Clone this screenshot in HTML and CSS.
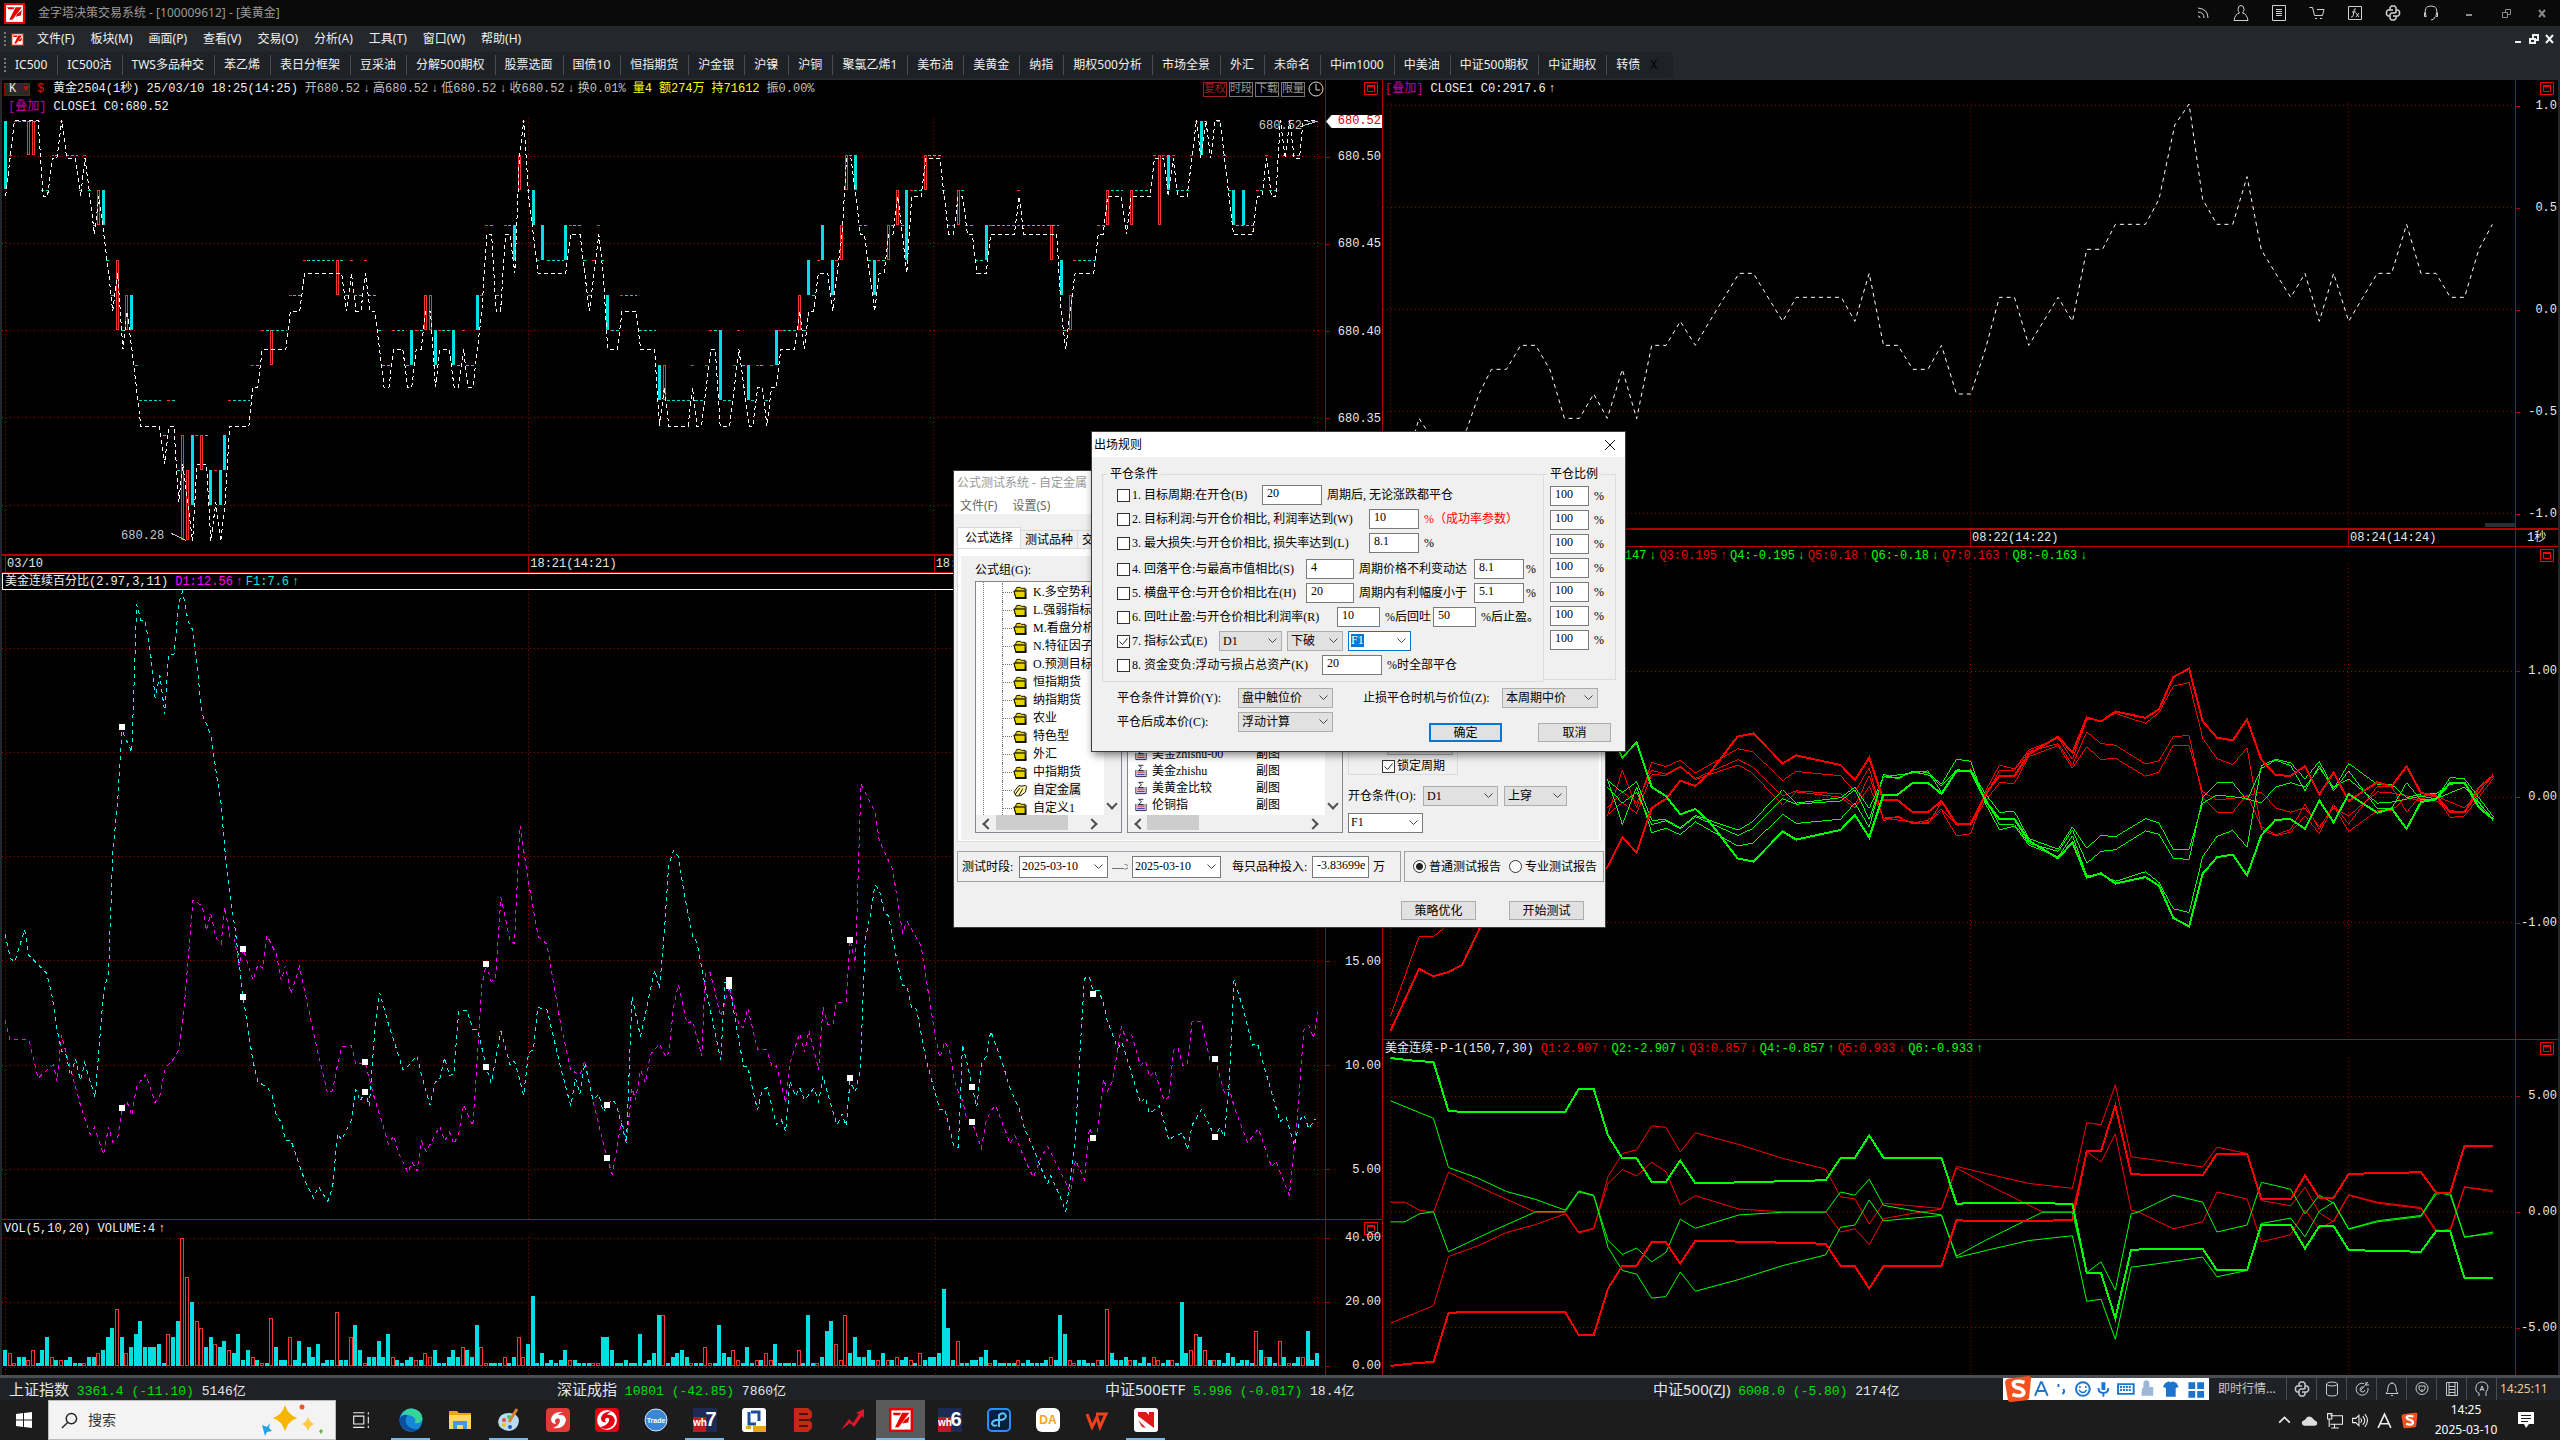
FILE: index.html
```html
<!DOCTYPE html>
<html lang="zh-CN">
<head>
<meta charset="utf-8">
<title>金字塔决策交易系统</title>
<link rel="stylesheet" href="styles.css">
</head>
<body>
<svg class="defs" aria-hidden="true">
  <symbol id="i-app" viewBox="0 0 20 20"><path fill="#e60000" d="M0 0h20v20H0z"/><path fill="#fff" d="M2 2h16v16H2z"/><path fill="#e60000" d="M3 4h7l-1 2H4zM11 4h6l-9 12H5zM13 10l4-3-1 5-5 1z"/></symbol>
  <symbol id="i-folder" viewBox="0 0 16 14"><path fill="#e6d200" stroke="#000" d="M3.500 12.500V3.500l1-2h4l1 1h4v3M1.500 5.500h11l2 7h-11z"/><path fill="#e6d200" stroke="#000" d="M1.500 5.500h12v7h-10z"/><path stroke="#000" d="M14.500 3v10M3 13.500h12"/></symbol>
  <symbol id="i-open" viewBox="0 0 16 14"><path fill="#fff7a0" stroke="#000" d="M1.500 8.500 6 2.500l2-1 1 1 5-1 1 1-1 6-5 4-5 .5z"/><path stroke="#000" fill="none" d="M3 11l5-7M7 12l4-7"/></symbol>
  <symbol id="i-formula" viewBox="0 0 14 16"><path fill="#fff" stroke="#1d1d40" d="M1.500 7.500v7h11v-7M3 8.500h8"/><path fill="none" stroke="#1d1d40" d="M9.500 2.500h-5l3 2.500-3 3h5"/><path stroke="#d00000" d="M3 10.500h8"/><path stroke="#0000c0" d="M3 12.500h8"/></symbol>
  <symbol id="i-max" viewBox="0 0 14 13"><path fill="none" stroke="#f00" d="M.5.5h13v12H.5z"/><path fill="none" stroke="#f00" d="M3.500 3.500h7v6h-7z"/><path stroke="#f00" stroke-width="2" d="M3 4h8"/></symbol>
  <symbol id="i-python" viewBox="0 0 16 16"><path fill="none" stroke="currentColor" stroke-width="1.500" d="M5 5V2.500L6.500 1h3L11 2.500v5L9.500 8h-3L5 9.500v4L6.500 15h3l1.500-1.500V11M8 5H3L1.500 6.500v3L3 11h2M8 11h5l1.500-1.500v-3L13 5h-2"/></symbol>
  <symbol id="i-sogou" viewBox="0 0 30 28"><path fill="#f4511e" d="M4 3 26 0q3 0 3 3l-2 20q0 3-3 3L7 28q-3 0-3-3L1 7q0-3 3-4z"/><path fill="none" stroke="#fff" stroke-width="4" d="M22 7q-10-3-12 1 0 4 6 5 6 2 5 6-2 4-12 1"/></symbol>
</svg>

<header class="titlebar">
  <svg class="logo"><use href="#i-app"/></svg>
  <span class="title">金字塔决策交易系统 - [100009612] - [美黄金]</span>
  <div class="title-tools">
    <button aria-label="订阅"><svg viewBox="0 0 16 16"><path class="ln" d="M3 3q10 1 10 10M3 7q6 0 6 6M3 11q2 0 2 2"/></svg></button>
    <button aria-label="用户"><svg viewBox="0 0 16 16"><path class="ln" d="M8 .5q-3 0-3 4 0 2 1.500 3.500Q2 9 1 15.500h14Q14 9 9.500 8 11 6.500 11 4.500q0-4-3-4z"/></svg></button>
    <button aria-label="资料"><svg viewBox="0 0 16 16"><path class="ln" d="M1.500.5h13v15h-13zM5 4.500h6M5 6.500h6M5 8.500h6M5 10.500h6"/></svg></button>
    <button aria-label="商城"><svg viewBox="0 0 16 16"><path class="ln" d="M.5 2.500h3l2 8h8l1.500-6H8M6 13.500h2M11 13.500h2"/></svg></button>
    <button aria-label="公式"><svg viewBox="0 0 16 16"><path class="ln" d="M1.500 1.500h13v13h-13zM9 4q-2-1-2 2l-1 5q0 1-2 1M5 7h4M9 8l3 4M12 8l-3 4"/></svg></button>
    <button aria-label="Python"><svg viewBox="0 0 16 16"><use href="#i-python"/></svg></button>
    <button aria-label="客服"><svg viewBox="0 0 16 16"><path class="ln" d="M3 11Q0 1 8 1t5 10M1.500 7.500v4h2M14.500 7.500v4h-2M12 12q-1 3-4 3"/></svg></button>
    <button class="dim" aria-label="最小化"><svg viewBox="0 0 16 16"><path class="ln" stroke-width="2" d="M5 10h6"/></svg></button>
    <button class="dim" aria-label="还原"><svg viewBox="0 0 16 16"><path class="ln" d="M4.500 7.500h5v5h-5zM7.500 7V4.500h5v5H10"/></svg></button>
    <button class="dim" aria-label="关闭"><svg viewBox="0 0 16 16"><path class="ln" stroke-width="2" d="m5 5 6 7M11 5l-6 7"/></svg></button>
  </div>
</header>

<nav class="menubar">
  <i class="grip"></i>
  <svg class="mdi"><use href="#i-app"/></svg>
  <a href="#">文件(F)</a><a href="#">板块(M)</a><a href="#">画面(P)</a><a href="#">查看(V)</a><a href="#">交易(O)</a><a href="#">分析(A)</a><a href="#">工具(T)</a><a href="#">窗口(W)</a><a href="#">帮助(H)</a>
  <div class="mdi-tools">
    <button aria-label="最小化"><svg viewBox="0 0 12 12"><path class="ln" stroke-width="2" d="M3 9h6"/></svg></button>
    <button aria-label="还原"><svg viewBox="0 0 12 12"><path class="ln" stroke-width="2" d="M2 6h5v4H2zM5 5V2h5v5H8"/></svg></button>
    <button aria-label="关闭"><svg viewBox="0 0 12 12"><path class="ln" stroke-width="2" d="m2 2 7 8M9 2l-7 8"/></svg></button>
  </div>
</nav>

<nav class="tabstrip"><div class="tabs">
  <i class="grip"></i>
  <a href="#">IC500</a><a href="#">IC500沽</a><a href="#">TWS多品种交</a><a href="#">苯乙烯</a><a href="#">表日分框架</a><a href="#">豆采油</a><a href="#">分解500期权</a><a href="#">股票选面</a><a href="#">国债10</a><a href="#">恒指期货</a><a href="#">沪金银</a><a href="#">沪镍</a><a href="#">沪铜</a><a href="#">聚氯乙烯1</a><a href="#">美布油</a><a href="#">美黄金</a><a href="#">纳指</a><a href="#">期权500分析</a><a href="#">市场全景</a><a href="#">外汇</a><a href="#">未命名</a><a href="#">中im1000</a><a href="#">中美油</a><a href="#">中证500期权</a><a href="#">中证期权</a><a href="#">转债</a>
  <button class="tab-close">X</button>
</div></nav>

<main class="charts">
  <div class="col col-left">
    <section class="panel p-price">
      <div class="head two">
        <div class="line">
          <span class="kbox">K<b>▾</b></span><span class="red">$</span>
          <span class="white">黄金2504(1秒) 25/03/10 18:25(14:25)</span>
          <span class="quote">开680.52<i>↓</i>高680.52<i>↓</i>低680.52<i>↓</i>收680.52<i>↓</i>换0.01%</span>
          <span class="yellow">量4</span><span class="yellow">额274万</span><span class="yellow">持71612</span><span class="quote">振0.00%</span>
          <span class="chips"><button class="hot">复权</button><button>时段</button><button>下载</button><button>限量</button><svg viewBox="0 0 16 16"><circle cx="8" cy="8" r="7" class="ln"/><path class="ln" d="M8 3v6h4"/></svg></span>
        </div>
        <div class="line"><span class="magenta">[叠加]</span><span class="white">CLOSE1 C0:680.52</span></div>
      </div>
      <div class="corner"><svg><use href="#i-max"/></svg></div>
      <div class="plot">
        <svg viewBox="4 24 2964 1308" preserveAspectRatio="none">
          <path class="grid" d="M4 139H2968M4 400H2968M4 661H2968M4 922H2968M4 1186H2968M12 24V1332M1184 24V1332M2092 24V1332M2951 24V1332"/>
          <path class="up" d="M64 34V135M75 34V135M221 241V345M263 451V660M284 556V660M409 976V1290M420 1081V1290M452 976V1080M608 661V765M756 451V555M953 556V660M964 556V660M1163 136V240M1489 766V870M1791 556V660M1885 346V450M1896 136V240M1990 346V450M2011 241V345M2073 136V240M2147 241V345M2356 346V450M2397 556V660M2480 241V345M2534 241V345M2597 136V345"/>
          <path class="up-core" d="M64 37V132M75 37V132M221 244V342M263 454V657M284 559V657M409 979V1287M420 1084V1287M452 979V1077M608 664V762M756 454V552M953 559V657M964 559V657M1163 139V237M1489 769V867M1791 559V657M1885 349V447M1896 139V237M1990 349V447M2011 244V342M2073 139V237M2147 244V342M2356 349V447M2397 559V657M2480 244V342M2534 244V342M2597 139V342"/>
          <path class="down" d="M12 34V238M232 241V345M295 556V660M431 976V1185M472 1081V1185M494 1081V1185M503 976V1080M921 661V765M975 661V765M1016 661V765M1070 556V660M1153 346V450M1195 241V345M1215 346V450M1267 346V450M1361 556V660M1477 766V870M1614 661V870M1676 766V870M1740 661V765M1811 451V555M1843 346V450M1864 451V555M1917 136V240M1959 451V555M2031 241V450M2209 346V450M2377 451V555M2617 136V240M2691 34V135M2763 241V345M2785 241V345"/>
          <path class="flat cy" d="M40 34H90M92 241h17M123 136h7M147 136h27M176 241h7M197 241h7M208 346h7M238 451h8M249 556h7M271 661h7M301 766h8M311 871h50M385 871h7M364 976h8M396 1081h7M458 976h8M521 871h39M573 766h8M595 661h48M656 556h19M688 451h60M762 451h7M772 556h8M793 556h18M825 556h17M846 661h7M856 766h18M888 661h17M909 766h7M940 661h8M990 661h20M1023 766h8M1043 766h20M1097 346h7M1110 556h14M1138 346h8M1180 241h7M1201 451h7M1224 451h38M1284 346h19M1305 451h8M1317 556h7M1347 451h8M1369 661h18M1399 556h28M1431 661h38M1494 871h51M1557 871h19M1599 661h8M1620 871h18M1662 766h8M1682 871h8M1703 766h9M1714 871h7M1753 661h31M1798 661h10M1819 556h8M1901 136h9M1924 346h17M1944 451h7M1975 451h8M1995 346h8M2018 346h7M2048 241h18M2079 136h30M2111 241h8M2121 346h20M2152 241h8M2162 346h20M2184 451h20M2223 346h148M2381 661h12M2414 451h40M2468 346h7M2488 241h28M2519 346h8M2542 241h36M2635 241h28M2727 34h8M2740 136h8M2750 241h8M2768 346h42M2822 241h9M2843 241h19M2873 136h10M2895 136h20M2928 34h25"/>
          <path class="flat rd" d="M20 136h7M30 34h7M115 136h6M134 34h7M186 136h7M373 871h8M437 976h7M479 1081h7M511 871h7M562 766h8M585 661h7M647 556h8M679 451h7M784 451h7M815 451h7M878 661h7M930 661h7M981 661h7M1035 661h7M1075 556h7M1086 346h7M1129 346h7M1169 34h7M1274 346h7M1326 451h7M1337 346h7M1389 556h7M1548 766h7M1579 766h7M1588 661h7M1651 661h7M1641 766h7M1693 766h7M1725 766h7M1744 661h7M1830 451h7M1871 451h7M1964 451h7M2038 241h7M2216 346h7M2279 241h7M2404 451h7M2458 346h7M2583 136h7M2603 136h7M2625 136h7M2666 136h7M2676 34h7M2696 34h8M2814 241h7M2834 136h7M2865 34h7M2886 34h7"/>
          <polyline class="dash white-l" points="12,259 32,31 85,31 96,259 106,259 117,145 127,145 138,31 149,145 168,145 180,259 190,145 201,259 211,373 221,259 232,373 243,490 252,604 263,490 275,718 284,604 295,718 305,832 315,949 357,949 368,1062 378,949 389,949 400,1177 409,1062 420,1177 431,1294 441,1062 462,1062 472,1294 483,1177 494,1294 504,1177 514,949 557,949 566,832 577,832 587,718 640,718 650,604 671,604 682,490 765,490 776,604 787,490 797,604 808,604 818,490 829,604 839,604 850,718 860,832 871,832 881,718 902,718 913,832 922,832 932,718 943,718 953,604 964,604 975,832 985,718 1006,718 1017,832 1027,832 1038,718 1048,832 1059,832 1069,718 1079,604 1090,373 1101,373 1111,604 1121,604 1132,373 1142,373 1153,490 1163,145 1173,31 1184,259 1205,490 1267,490 1278,373 1299,373 1320,604 1341,373 1351,490 1361,718 1383,718 1393,604 1424,604 1435,718 1466,718 1477,949 1488,832 1498,949 1541,949 1551,832 1561,949 1571,949 1592,718 1602,718 1613,949 1634,949 1655,718 1678,949 1686,949 1697,832 1707,832 1718,949 1728,832 1738,832 1749,718 1780,718 1791,604 1802,718 1811,604 1822,604 1833,490 1854,490 1865,604 1875,490 1886,373 1896,145 1906,145 1917,259 1927,373 1936,373 1948,490 1959,604 1969,490 1980,490 1991,373 2000,373 2011,259 2021,373 2031,490 2042,259 2063,259 2074,145 2105,145 2115,259 2125,373 2136,373 2146,259 2156,259 2167,373 2178,373 2188,490 2209,490 2219,373 2272,373 2283,259 2293,373 2367,373 2377,604 2387,718 2397,604 2408,490 2450,490 2460,373 2471,373 2481,259 2512,259 2523,373 2534,259 2576,259 2586,145 2607,145 2617,259 2628,145 2638,259 2659,259 2670,145 2680,31 2690,145 2701,31 2712,145 2722,31 2733,31 2743,145 2753,259 2763,373 2806,373 2816,259 2827,259 2837,145 2848,259 2858,259 2868,31 2879,145 2889,31 2899,145 2911,145 2919,31 2953,31"/>
          <path class="pointer" d="M383 1270 416 1291M2912 50 2950 34"/>
        </svg>
        <span class="note note-low">680.28</span><span class="note note-high">680.52</span>
      </div>
      <div class="axis"><span>680.50</span><span>680.45</span><span>680.40</span><span>680.35</span><span>680.30</span><b class="tag">680.52</b></div>
    </section>
    <div class="times"><span>03/10</span><span>18:21(14:21)</span><span>18:22(14:22)</span></div>
    <section class="panel p-ratio">
      <div class="head boxed"><span class="white">美金连续百分比(2.97,3,11)</span><span class="fuchsia">D1:12.56<i>↑</i></span><span class="aqua">F1:7.6<i>↑</i></span></div>
      <div class="plot">
        <svg viewBox="3 39 2161 1217" preserveAspectRatio="none">
          <path class="grid" d="M3 152H2164M3 353H2164M3 555H2164M3 756H2164M3 959H2164M3 1161H2164M8 39V1256M863 39V1256M1527 39V1256M2152 39V1256"/>
          <polyline class="dash fuchsia-l" points="8,872 16,909 47,909 62,984 71,973 87,958 93,990 100,900 115,966 131,1035 147,1092 154,1079 169,1131 177,1078 184,1107 192,1100 199,1041 207,1028 215,1056 223,999 238,976 253,1031 261,1017 269,965 284,945 292,928 299,867 307,755 315,639 330,650 337,697 344,665 353,713 361,723 367,652 375,710 383,715 390,765 397,733 413,794 421,764 429,771 436,708 451,743 459,794 466,766 475,820 489,768 497,813 520,940 535,1013 543,1008 551,958 558,923 574,921 581,958 596,953 612,1025 628,1085 634,1111 643,1095 650,1126 666,1166 673,1146 681,1163 688,1105 696,1125 718,1077 726,1105 734,1088 741,1111 749,1091 757,1035 772,1076 787,802 794,763 802,796 809,793 818,634 833,718 840,723 849,495 863,604 871,657 879,710 893,724 916,882 932,968 947,977 955,950 970,1035 991,1138 1000,1170 1015,1064 1023,1105 1032,1003 1038,1025 1046,968 1054,992 1062,938 1077,917 1088,943 1092,935 1100,845 1108,803 1122,878 1131,873 1146,940 1152,779 1160,780 1177,864 1191,806 1207,882 1214,886 1221,847 1237,928 1252,928 1261,961 1268,960 1283,1031 1290,954 1306,897 1314,933 1321,891 1337,968 1344,846 1352,880 1360,881 1366,837 1382,836 1388,716 1397,760 1406,415 1429,468 1436,524 1444,545 1458,580 1466,643 1474,702 1481,680 1504,727 1527,900 1535,944 1543,913 1551,931 1558,984 1568,1022"/>
          <polyline class="dash aqua-l" points="8,705 17,752 24,758 40,696 47,746 64,766 76,780 85,826 92,884 100,931 107,935 115,979 123,946 131,988 138,954 155,1021 169,815 177,780 184,545 192,447 199,310 215,353 223,67 230,98 237,99 246,165 253,247 261,204 269,279 275,163 284,163 292,62 298,42 307,100 314,115 322,185 329,277 338,301 345,325 353,393 361,454 368,555 376,634 384,697 397,827 405,890 413,951 421,990 437,1003 444,1014 451,1056 459,1068 466,1103 475,1104 484,1135 497,1180 512,1215 520,1193 535,1222 543,1196 551,1091 558,1103 574,1064 581,1005 588,1028 596,1010 603,1037 612,890 620,818 634,878 645,918 658,968 666,960 681,940 688,976 702,1036 711,990 718,986 726,944 734,979 741,974 749,853 763,853 772,889 780,890 794,962 802,993 818,893 833,958 840,951 848,984 855,1017 863,935 871,928 878,847 893,850 908,925 916,965 932,1037 940,984 947,1014 955,954 968,1025 978,1015 985,1048 1000,1024 1007,1037 1023,1110 1032,826 1046,903 1062,813 1069,774 1077,810 1085,700 1092,570 1100,543 1108,555 1117,625 1131,709 1138,720 1146,770 1154,820 1161,858 1177,948 1184,797 1191,806 1199,859 1214,960 1221,961 1237,1045 1245,1006 1253,1002 1268,1073 1276,1064 1283,1087 1290,990 1299,1018 1306,1002 1314,1026 1329,1003 1337,1029 1344,980 1360,1048 1367,1074 1375,1053 1382,1076 1388,990 1397,1010 1405,968 1413,715 1421,670 1429,610 1436,619 1444,662 1451,670 1466,763 1474,804 1481,805 1489,848 1497,850 1504,896 1512,945 1527,1012 1535,1045 1543,1043 1558,1116 1565,1117 1568,1038"/>
          <g transform="translate(1568 677.5) scale(.5444 .6453)">
            <polyline class="dash fuchsia-l" points="0,534 7,540 18,590 36,606 64,685 78,604 92,572 107,556 150,670 164,646 205,742 220,772 242,714 263,678 331,816 346,720 373,778 388,622 398,652 412,637 430,478 443,512 458,480 484,320 500,362 515,346 541,436 556,423 568,470 584,454 612,542 626,530 641,390 653,382 668,436 682,436 696,304 724,305 750,420 765,417 793,518 808,505 822,560 863,668 895,626 935,742 947,722 988,826 1003,677 1012,590 1031,330 1046,315 1060,355 1073,276"/>
            <polyline class="dash aqua-l" points="0,560 7,373 21,430 50,562 65,427 79,408 92,333 130,438 148,500 178,568 192,622 222,690 250,762 263,790 272,766 300,829 317,874 331,770 346,650 357,440 373,175 388,170 398,210 417,212 431,254 441,300 473,385 486,368 515,462 541,548 556,533 568,580 598,558 612,606 626,660 641,649 668,638 682,690 696,615 725,567 765,651 779,622 793,649 808,480 822,178 849,265 877,376 892,370 960,604 978,590 1003,677 1018,602 1031,583 1046,625 1066,597"/>
            <path class="marks" d="M36 501h.1M36 606h.1M399 222h.1M399 654h.1M765 417h.1M765 651h.1"/>
          </g>
          <path class="marks" d="M199 304h.1M199 1041h.1M397 733h.1M397 827h.1M596 952h.1M596 1010h.1M794 763h.1M794 962h.1M991 1035h.1M991 1138h.1M1191 794h.1M1191 806h.1M1388 716h.1M1388 984h.1"/>
        </svg>
      </div>
      <div class="axis"><span>30.00</span><span>25.00</span><span>20.00</span><span>15.00</span><span>10.00</span><span>5.00</span></div>
    </section>
    <section class="panel p-vol">
      <div class="head"><span class="white">VOL(5,10,20) VOLUME:4<i>↑</i></span></div>
      <div class="corner"><svg><use href="#i-max"/></svg></div>
      <div class="plot">
        <svg viewBox="3 1289 2161 269" preserveAspectRatio="none">
          <path class="grid" d="M3 1292H2164M3 1416H2164M3 1543H2164M8 1289V1558M863 1289V1558M1527 1289V1558M2152 1289V1558"/>
          <path class="vol-up" id="vol-up"/><path class="vol-core" id="vol-core"/><path class="vol-down" id="vol-down"/>
        </svg>
      </div>
      <div class="axis"><span>40.00</span><span>20.00</span><span>0.00</span></div>
    </section>
  </div>

  <div class="col col-right">
    <section class="panel p-overlay">
      <div class="head"><span class="magenta">[叠加]</span><span class="white">CLOSE1 C0:2917.6<i>↑</i></span></div>
      <div class="corner"><svg><use href="#i-max"/></svg></div>
      <div class="plot">
        <svg viewBox="4 81 1504 1293" preserveAspectRatio="none">
          <path class="grid" d="M4 106H1508M4 412H1508M4 718H1508M4 1024H1508M4 1330H1508M14 100V1374M785 100V1374M1287 100V1374"/>
          <polyline class="dash white-l" points="46,1090 52,1045 63,1084 80,1120 100,1120 115,1080 132,970 148,898 168,898 187,826 207,826 226,900 245,1045 265,1045 284,972 302,1045 322,898 341,1046 361,826 380,826 399,754 419,826 438,754 477,610 496,610 535,754 553,682 613,682 631,754 650,610 669,826 688,826 708,898 728,898 746,826 766,972 785,972 804,840 823,682 843,682 862,826 901,682 920,754 939,538 960,538 977,463 1017,463 1035,388 1056,165 1075,102 1093,388 1112,463 1133,463 1152,320 1171,540 1190,610 1210,682 1229,610 1248,754 1267,610 1287,754 1306,682 1325,610 1344,610 1364,463 1383,610 1403,610 1422,682 1441,682 1460,538 1478,463"/>
          <path fill="#2b2e33" d="M1468 1359h40v12h-40z"/>
        </svg>
      </div>
      <div class="axis"><span>1.0</span><span>0.5</span><span>0.0</span><span>-0.5</span><span>-1.0</span></div>
    </section>
    <div class="times"><span>08:20(14:20)</span><span>08:22(14:22)</span><span>08:24(14:24)</span><span class="unit">1秒</span></div>
    <section class="panel p-multi">
      <div class="head"><span class="white lead">美金连续-P(8,30)</span><span class="qs"><span class="q-r">Q1:0.147<i>↑</i></span><span class="q-g">Q2:-0.147<i>↓</i></span><span class="q-r">Q3:0.195<i>↑</i></span><span class="q-g">Q4:-0.195<i>↓</i></span><span class="q-r">Q5:0.18<i>↑</i></span><span class="q-g">Q6:-0.18<i>↓</i></span><span class="q-r">Q7:0.163<i>↑</i></span><span class="q-g">Q8:-0.163<i>↓</i></span></span></div>
      <div class="corner"><svg><use href="#i-max"/></svg></div>
      <div class="plot">
        <svg viewBox="4 45 1504 886" preserveAspectRatio="none">
          <defs>
            <polyline id="m1" points="14,916 52,800 71,814 91,806 109,793 133,723 200,640 302,611 322,555 341,583 361,500 380,483 399,449 419,459 438,435 475,367 496,361 535,417 553,402 612,420 631,448 650,406 669,486 688,486 708,508 728,508 746,487 766,530 785,530 804,475 823,440 843,440 862,400 901,367 920,397 939,331 958,339 977,320 1017,332 1035,316 1054,256 1075,240 1093,338 1112,369 1133,374 1152,335 1171,410 1190,439 1210,440 1229,422 1248,475 1267,434 1287,487 1325,452 1344,460 1364,422 1383,472 1403,477 1422,508 1441,508 1460,462 1479,440"/>
            <g id="m2">
              <polyline points="302,515 322,430 341,500 361,415 380,423 399,411 419,435 475,390 496,396 535,449 553,432 612,440 631,470 650,425 669,524 688,515 708,530 728,527 746,505 766,552 785,548 804,470 823,420 843,427 862,392 901,370 920,409 939,335 958,337 977,324 1017,342 1035,322 1054,273 1075,266 1093,370 1112,408 1133,419 1152,388 1171,540 1190,552 1210,545 1229,515 1248,548 1267,496 1287,544 1325,505 1344,505 1364,480 1383,487 1403,487 1422,505 1441,508 1479,437"/>
              <polyline points="302,500 322,470 341,490 361,430 380,437 399,422 419,445 475,410 496,424 535,478 553,468 612,474 631,495 650,440 669,519 688,517 708,528 728,523 746,502 766,532 785,531 804,480 823,430 843,430 862,395 901,380 920,420 939,358 958,380 977,383 1017,418 1035,412 1054,367 1075,365 1093,480 1112,508 1133,508 1152,475 1171,535 1190,550 1210,540 1229,493 1248,540 1267,493 1287,530 1325,460 1344,460 1364,508 1383,476 1403,478 1422,518 1441,515 1479,445"/>
              <polyline points="302,513 322,490 341,510 361,438 380,439 399,424 419,447 475,420 496,437 535,495 553,470 612,480 631,500 650,460 669,519 728,530 746,490 766,528 785,532 804,488 823,453 843,454 862,404 901,384 920,426 939,386 958,410 977,407 1017,441 1035,433 1054,383 1075,384 1093,470 1112,485 1133,482 1152,478 1171,470 1190,500 1210,508 1229,500 1248,535 1267,500 1287,515 1325,470 1344,472 1383,483 1403,478 1441,500 1479,440"/>
            </g>
            <clipPath id="rightof"><path d="M250 0h1300v1000H250z"/></clipPath>
          </defs>
          <path class="grid" d="M4 245H1508M4 480H1508M4 714H1508M14 45V931M785 45V931M1287 45V931"/>
          <g class="s-red"><use href="#m2"/><polyline points="14,888 52,740 71,740 86,723 120,690"/></g>
          <g class="s-green"><use href="#m2" transform="matrix(1 0 0 -1 0 961)"/></g>
          <g class="s-red thick"><use href="#m1"/></g>
          <g class="s-green thick"><use href="#m1" transform="matrix(1 0 0 -1 0 961)" clip-path="url(#rightof)"/></g>
        </svg>
      </div>
      <div class="axis"><span>1.00</span><span>0.00</span><span>-1.00</span></div>
    </section>
    <section class="panel p-p1">
      <div class="head"><span class="white">美金连续-P-1(150,7,30)</span><span class="qs"><span class="q-r">Q1:2.907<i>↑</i></span><span class="q-g">Q2:-2.907<i>↓</i></span><span class="q-r">Q3:0.857<i>↓</i></span><span class="q-g">Q4:-0.857<i>↑</i></span><span class="q-r">Q5:0.933<i>↓</i></span><span class="q-g">Q6:-0.933<i>↑</i></span></span></div>
      <div class="corner"><svg><use href="#i-max"/></svg></div>
      <div class="plot">
        <svg viewBox="4 963 1504 596" preserveAspectRatio="none">
          <defs>
            <polyline id="n1" points="14,965 52,971 71,972 91,1064 110,1066 246,1066 264,1023 284,1023 303,1110 322,1153 341,1153 361,1197 380,1197 399,1157 419,1200 592,1194 612,1152 631,1152 650,1110 669,1152 746,1152 766,1238 804,1236 920,1238 939,1368 958,1368 977,1453 998,1324 1093,1322 1112,1363 1152,1363 1171,1277 1210,1277 1229,1322 1248,1280 1267,1280 1287,1325 1383,1328 1403,1290 1422,1290 1441,1378 1479,1378"/>
            <g id="n2">
              <polyline points="14,1045 52,1067 71,1078 91,1170 130,1190 168,1215 207,1230 246,1250 264,1214 284,1222 303,1320 322,1363 341,1370 361,1415 380,1412 399,1366 419,1402 477,1380 535,1354 592,1334 612,1282 631,1278 650,1231 669,1270 746,1260 766,1339 804,1326 862,1307 920,1298 939,1421 958,1417 977,1492 998,1357 1035,1350 1093,1338 1112,1375 1152,1363 1171,1275 1210,1265 1229,1300 1248,1252 1267,1235 1287,1285 1325,1270 1383,1260 1403,1216 1422,1222 1441,1300 1479,1294"/>
              <polyline points="14,1272 33,1272 52,1257 71,1253 91,1328 148,1290 207,1253 246,1253 264,1216 284,1223 303,1307 322,1333 341,1321 361,1347 380,1329 399,1267 419,1284 477,1259 535,1254 592,1254 612,1216 631,1222 650,1192 669,1241 708,1251 746,1259 766,1336 804,1307 880,1254 920,1254 939,1367 958,1347 977,1400 998,1257 1007,1254 1054,1222 1093,1235 1112,1291 1152,1278 1171,1198 1190,1204 1210,1211 1229,1257 1248,1222 1267,1237 1287,1286 1325,1272 1383,1262 1403,1220 1422,1217 1441,1301 1479,1291"/>
            </g>
          </defs>
          <path class="grid" d="M4 1037H1508M4 1253H1508M4 1470H1508M14 963V1559M785 963V1559M1287 963V1559"/>
          <g class="s-red"><use href="#n2" transform="matrix(1 0 0 -1 0 2507)"/></g>
          <g class="s-green"><use href="#n2"/></g>
          <g class="s-red thick"><use href="#n1" transform="matrix(1 0 0 -1 0 2507)"/></g>
          <g class="s-green thick"><use href="#n1"/></g>
        </svg>
      </div>
      <div class="axis"><span>5.00</span><span>0.00</span><span>-5.00</span></div>
    </section>
  </div>
</main>

<footer class="status">
  <div class="indices">
    <span><b>上证指数</b> <em>3361.4 (-11.10)</em> 5146亿</span>
    <span><b>深证成指</b> <em>10801 (-42.85)</em> 7860亿</span>
    <span><b>中证500ETF</b> <em>5.996 (-0.017)</em> 18.4亿</span>
    <span><b>中证500(ZJ)</b> <em>6008.0 (-5.80)</em> 2174亿</span>
  </div>
  <div class="status-tools">
    <span class="live">即时行情...</span>
    <button aria-label="Python"><svg viewBox="0 0 16 16"><use href="#i-python"/></svg></button>
    <button aria-label="数据"><svg viewBox="0 0 16 16"><path class="ln" d="M2.500 3v10q0 2 5.500 2t5.500-2V3q0-2-5.500-2T2.500 3q0 2 5.500 2t5.500-2"/></svg></button>
    <button aria-label="目标"><svg viewBox="0 0 16 16"><path class="ln" d="M10 2.500A6 6 0 1 0 14 7M9 6a2.500 2.500 0 1 0 2 3M7 9l7-8M12 1v3h3"/></svg></button>
    <button aria-label="提醒"><svg viewBox="0 0 16 16"><path class="ln" d="M2 12.500h12q-2-1-2-6 0-4-4-4.500-4 .5-4 4.500 0 5-2 6M7 14.500h2M8 1v1"/></svg></button>
    <button aria-label="设置"><svg viewBox="0 0 16 16"><circle class="ln" cx="8" cy="7.500" r="6"/><path class="ln" d="M5 5h6v3q-3 5-6 0zM8 8v3"/></svg></button>
    <button aria-label="日志"><svg viewBox="0 0 16 16"><path class="ln" d="M2.500 1.500h11v13h-11zM5 1v14M11 1v14M5 5.500h6M5 8.500h6M5 11.500h6"/></svg></button>
    <button aria-label="AI"><svg viewBox="0 0 16 16"><path class="ln" d="M5 15v-3Q1 11 2 6q1-5 6-5t6 5q0 3-2 5v4M6 10l2-5 2 5M7 8.500h2"/></svg></button>
    <time>14:25:11</time>
  </div>
  <div class="ime">
    <svg class="ime-logo"><use href="#i-sogou"/></svg>
    <svg viewBox="0 0 176 18" class="ime-icons">
      <g fill="none" stroke="#1b75d0" stroke-width="2"><path d="M1 16 7 2h1l6 14M3.500 11h8"/><path d="M25 4v3M30 9q2 3-1 5"/><circle cx="50" cy="9" r="7"/><path d="M47 6v2M53 6v2M46 10q4 5 8 0" stroke-width="1.500"/><path d="M66 8q0 5 5 5t5-5M71 13v4"/><path d="M86 4h16v10H86z"/><path d="M88 7h12M88 10h12" stroke-dasharray="2 1"/></g>
      <path fill="#1b75d0" d="M69 2h4v8h-4zM134 3l4-2q2 2 4 0l4 2 2 4-3 1v9h-10V8l-3-1zM158 2h7v7h-7zM167 2h7v7h-7zM158 11h7v7h-7zM167 11h7v7h-7z"/>
      <path fill="#9db7d8" d="M112 3a3 3 0 1 1 6 0v4h4v9h-12q0-8 2-9z"/>
    </svg>
  </div>
</footer>

<footer class="taskbar">
  <button class="start" aria-label="开始"><svg viewBox="0 0 16 16"><path fill="#fff" d="M0 2l7-1v6.500H0zM8 1l8-1v7.500H8zM0 8.500h7V15l-7-1zM8 8.500h8V16l-8-1z"/></svg></button>
  <label class="search">
    <svg viewBox="0 0 18 18"><circle cx="11" cy="7" r="5.500" fill="none" stroke="#222" stroke-width="1.500"/><path stroke="#222" stroke-width="1.500" d="m7 11-6 6"/></svg>
    <input type="text" placeholder="搜索">
    <svg class="spark" viewBox="0 0 64 32"><path fill="#f7b500" d="M24 1q3 10 12 13-9 3-12 13-3-10-12-13Q21 11 24 1z"/><path fill="#ffcb45" d="M47 13q1.500 5 6 7-4.500 2-6 7-1.500-5-6-7 4.500-2 6-7z"/><path fill="#1fa2e8" d="m1 21 5 2 3-4-1 5 3 3-5 1-2 4z"/><circle cx="41" cy="3" r="2.500" fill="#e8572a"/><path fill="#6cb33f" d="m60 25 2 2-2 3-2-3z"/></svg>
  </label>
  <button class="tview" aria-label="任务视图"><svg viewBox="0 0 16 16"><path fill="none" stroke="#eee" d="M1 1.500h10M1.500 4.500h9v7h-9zM1 14.500h10M14.500 1v2M14.500 5v6M14.500 13v2"/></svg></button>
  <div class="apps">
    <button class="open" aria-label="Edge"><svg viewBox="0 0 24 24"><circle cx="12" cy="12" r="11.500" fill="#1686d9"/><path fill="#38d39a" d="M2 8Q6 0 13 .5 23 2 23.500 11q-1 5-8 4 2-2 0-5Q11 5 2 8z"/><path fill="#0c4f9e" d="M.5 12q2-6 8-5-3 4-1 9 3 6 12 5-4 3-9 2Q1 21 .5 12z"/></svg></button>
    <button aria-label="文件"><svg viewBox="0 0 24 24"><path fill="#e9a700" d="M1 3h8l2 2h12v16H1z"/><path fill="#ffd75e" d="M1 7h22v14H1z"/><path fill="#3f9ae0" d="M5 21v-8h14v8h-4v-4H9v4z"/></svg></button>
    <button class="open" aria-label="画图"><svg viewBox="0 0 24 24"><path fill="#b9dcf3" d="M12 5q9 0 10 8-1 9-10 10Q2 22 1 14q1-9 11-9z"/><circle cx="7" cy="12" r="2" fill="#e74c3c"/><circle cx="12" cy="9" r="2" fill="#2ecc71"/><circle cx="7" cy="17" r="2" fill="#f1c40f"/><circle cx="13" cy="19" r="2" fill="#2257c4"/><path stroke="#d9822b" stroke-width="3" d="m12 14 8-13"/></svg></button>
    <button aria-label="同花顺"><svg viewBox="0 0 24 24"><rect width="24" height="24" rx="4" fill="#df3a35"/><path fill="#fff" d="M17 4Q6 3 5 12q1 4 5 4-2-3 0-5 4-2 4 2-1 5-7 7 11 2 13-8-1-6-8-5 1-2 5-3z"/></svg></button>
    <button aria-label="行情"><svg viewBox="0 0 24 24"><rect width="24" height="24" rx="4" fill="#e60012"/><circle cx="12" cy="12" r="10" fill="#fff"/><path fill="#e60012" d="M17 3Q6 4 6 11q1 4 5 3-2-2 0-4 4-1 3 3-2 5-9 6 3 2 6 2 8-1 9-9-2-6-8-5 1-2 5-4z"/></svg></button>
    <button aria-label="Trade"><svg viewBox="0 0 24 24"><circle cx="12" cy="12" r="11" fill="#3c86d8" stroke="#d7e6f7"/><text x="12" y="15" class="ico-t t7" fill="#fff">Trade</text></svg></button>
    <button class="open" aria-label="wh7"><svg viewBox="0 0 24 24"><path fill="#1c2a55" d="M0 0h24v24H0z"/><path fill="#c01820" d="M0 9h13v15H0z"/><text x="7" y="18" class="ico-t t10" fill="#fff">wh</text><text x="18" y="18" class="ico-t t20" fill="#fff">7</text></svg></button>
    <button aria-label="L"><svg viewBox="0 0 24 24"><rect width="24" height="24" rx="3" fill="#fff"/><path fill="none" stroke="#1d4e9e" stroke-width="3" d="M7 4v12h7M9 4h8v9"/><path fill="#eaa41c" d="M11 18h13v6H11zM4 18h5v3H4z"/></svg></button>
    <button aria-label="B"><svg viewBox="0 0 24 24"><path fill="#c22a16" d="M3 0h14l4 4v5l-3 3 3 3v5l-4 4H3z"/><path stroke="#501008" stroke-width="2" d="M8 6h9M8 12h10M8 18h9"/></svg></button>
    <button aria-label="箭头"><svg viewBox="0 0 24 24"><path fill="#e2182a" d="m1 22 8-11 4 4 6-9-3-1 8-4v9l-2-2-8 11-4-4z"/></svg></button>
    <button class="open current" aria-label="金字塔"><svg viewBox="0 0 20 20"><use href="#i-app"/></svg></button>
    <button aria-label="wh6"><svg viewBox="0 0 24 24"><path fill="#1c2a55" d="M0 0h24v24H0z"/><path fill="#c01820" d="M0 9h13v15H0z"/><text x="7" y="18" class="ico-t t10" fill="#fff">wh</text><text x="18" y="18" class="ico-t t20" fill="#fff">6</text></svg></button>
    <button aria-label="P"><svg viewBox="0 0 24 24"><rect x="1" y="1" width="22" height="22" rx="4" fill="#06213f" stroke="#2a8dff" stroke-width="2"/><path fill="none" stroke="#5cc4ff" stroke-width="2" d="M12 19V7q5-4 7 1-1 4-6 4H9q-4 1-4 4 2 3 5 1"/></svg></button>
    <button aria-label="DA"><svg viewBox="0 0 24 24"><rect width="24" height="24" rx="6" fill="#fff"/><text x="12" y="16" class="ico-t t12" fill="#f5a51d">DA</text></svg></button>
    <button aria-label="WPS"><svg viewBox="0 0 24 24"><path fill="none" stroke="#f0401e" stroke-width="3" d="m2 6 5 13 5-10 3 10L21 6H11"/></svg></button>
    <button class="open" aria-label="K"><svg viewBox="0 0 24 24"><rect width="24" height="24" rx="3" fill="#fff"/><path fill="#e01818" d="M4 4h8l3 3V4h5v16L4 8zM4 12l8 8-4-1z"/></svg></button>
  </div>
  <div class="tray">
    <svg viewBox="0 0 16 16"><path class="ln" stroke-width="1.500" d="m3 10 5-5 5 5"/></svg>
    <svg viewBox="0 0 16 16"><path fill="#ddd" d="M3 13q-3-1-2-4l3-2q2-4 6-2l3 3q3 1 2 4l-2 1z"/></svg>
    <svg viewBox="0 0 16 16"><path class="ln" d="M4 3.500h11.500v8H4M1.500 1.500h4v5h-4zM8 12v3M5 15h7M3 7v7"/></svg>
    <svg viewBox="0 0 16 16"><path class="ln" d="M1.500 6v4h3l3 3V3l-3 3zM9 6q2 2 0 4M11 4q4 4 0 8M13 2q5 6 0 12"/></svg>
    <svg viewBox="0 0 16 16"><path class="ln" stroke-width="1.500" d="M2 15 8 2l6 13M4 11h8"/></svg>
    <svg viewBox="0 0 30 28"><use href="#i-sogou"/></svg>
  </div>
  <div class="clock"><time>14:25</time><time>2025-03-10</time></div>
  <button class="notice" aria-label="通知"><svg viewBox="0 0 16 16"><path fill="#fff" d="M0 0h16v12h-5l-3 4-2-4H0z"/><path stroke="#1c1c1c" d="M3 3.500h10M3 6.500h10M3 9.500h7"/></svg></button>
</footer>

<section class="win win-test">
  <header>公式测试系统 - 自定金属</header>
  <nav><a href="#">文件(F)</a><a href="#">设置(S)</a></nav>
  <div class="wtabs"><button class="on">公式选择</button><button>测试品种</button><button>交易条件</button></div>
  <div class="page"><div class="page-in">
    <div class="tree-col">
      <span class="cap">公式组(G):</span>
      <div class="box">
        <ul class="tree">
          <li><svg><use href="#i-folder"/></svg>K.多空势利</li><li><svg><use href="#i-folder"/></svg>L.强弱指标</li><li><svg><use href="#i-folder"/></svg>M.看盘分析</li><li><svg><use href="#i-folder"/></svg>N.特征因子</li><li><svg><use href="#i-folder"/></svg>O.预测目标</li><li><svg><use href="#i-folder"/></svg>恒指期货</li><li><svg><use href="#i-folder"/></svg>纳指期货</li><li><svg><use href="#i-folder"/></svg>农业</li><li><svg><use href="#i-folder"/></svg>特色型</li><li><svg><use href="#i-folder"/></svg>外汇</li><li><svg><use href="#i-folder"/></svg>中指期货</li><li class="sel"><svg><use href="#i-open"/></svg><span>自定金属</span></li><li><svg><use href="#i-folder"/></svg>自定义1</li>
        </ul>
        <i class="vbar"></i><i class="hbar"><b></b></i>
      </div>
    </div>
    <div class="list-col"><div class="box">
      <ul class="list">
        <li><svg><use href="#i-formula"/></svg><span>美金zhishu-00</span>副图</li><li><svg><use href="#i-formula"/></svg><span>美金zhishu</span>副图</li><li><svg><use href="#i-formula"/></svg><span>美黄金比较</span>副图</li><li><svg><use href="#i-formula"/></svg><span>伦铜指</span>副图</li>
      </ul>
      <i class="vbar"></i><i class="hbar"><b></b></i>
    </div></div>
    <div class="opt-col">
      <div class="period">
        <label>周期: <select><option>多秒钟</option></select></label>
        <label class="chk lock"><input type="checkbox" checked>锁定周期</label>
      </div>
      <div class="cond"><label for="oc">开仓条件(O):</label><select id="oc" class="w75"><option>D1</option></select><select class="w62" aria-label="方向"><option>上穿</option></select></div>
      <input class="combo w75" value="F1" aria-label="对比值">
    </div>
  </div></div>
  <div class="bars">
    <div class="frame fr-time"><label for="t1">测试时段:</label><input id="t1" class="combo date" value="2025-03-10"><span class="to">—&gt;</span><input class="combo date" value="2025-03-10" aria-label="结束"><label for="amt" class="amt">每只品种投入:</label><input id="amt" class="amount" value="-3.83699e"><span>万</span></div>
    <div class="frame fr-rep"><label class="rad"><input type="radio" name="rep" checked>普通测试报告</label><label class="rad"><input type="radio" name="rep">专业测试报告</label></div>
  </div>
  <div class="acts"><button class="btn">策略优化</button><button class="btn">开始测试</button></div>
</section>

<section class="win win-exit">
  <header>出场规则<button class="x" aria-label="关闭"><svg viewBox="0 0 12 12"><path stroke="#111" d="m1 1 10 10M11 1 1 11"/></svg></button></header>
  <div class="body">
    <div class="groups">
      <fieldset class="g-cond"><legend>平仓条件</legend>
        <div class="r"><label class="chk l129"><input type="checkbox">1. 目标周期:在开仓(B)</label><input class="w60" value="20" aria-label="周期"><span>周期后, 无论涨跌都平仓</span></div>
        <div class="r"><label class="chk l236"><input type="checkbox">2. 目标利润:与开仓价相比, 利润率达到(W)</label><input class="w50" value="10" aria-label="利润率"><span class="hot">%（成功率参数）</span></div>
        <div class="r gap"><label class="chk l236"><input type="checkbox">3. 最大损失:与开仓价相比, 损失率达到(L)</label><input class="w50" value="8.1" aria-label="损失率"><span>%</span></div>
        <div class="r"><label class="chk l173"><input type="checkbox">4. 回落平仓:与最高市值相比(S)</label><input class="w48" value="4" aria-label="周期"><span class="mid">周期价格不利变动达</span><input class="w50" value="8.1" aria-label="幅度"><span class="pc">%</span></div>
        <div class="r"><label class="chk l173"><input type="checkbox">5. 横盘平仓:与开仓价相比在(H)</label><input class="w48" value="20" aria-label="周期"><span class="mid">周期内有利幅度小于</span><input class="w50" value="5.1" aria-label="幅度"><span class="pc">%</span></div>
        <div class="r"><label class="chk l204"><input type="checkbox">6. 回吐止盈:与开仓价相比利润率(R)</label><input class="w42" value="10" aria-label="利润率"><span class="mid2">%后回吐</span><input class="w42" value="50" aria-label="回吐"><span>%后止盈。</span></div>
        <div class="r"><label class="chk l87"><input type="checkbox" checked>7. 指标公式(E)</label><select class="w62" aria-label="指标"><option>D1</option></select><select class="w56" aria-label="方向"><option>下破</option></select><input class="combo focus w62" value="F1" aria-label="对比值"></div>
        <div class="r"><label class="chk l189"><input type="checkbox">8. 资金变负:浮动亏损占总资产(K)</label><input class="w60" value="20" aria-label="亏损"><span>%时全部平仓</span></div>
      </fieldset>
      <fieldset class="g-ratio"><legend>平仓比例</legend>
        <div class="r"><input value="100" aria-label="比例1"><span>%</span></div><div class="r"><input value="100" aria-label="比例2"><span>%</span></div><div class="r"><input value="100" aria-label="比例3"><span>%</span></div><div class="r"><input value="100" aria-label="比例4"><span>%</span></div><div class="r"><input value="100" aria-label="比例5"><span>%</span></div><div class="r"><input value="100" aria-label="比例6"><span>%</span></div><div class="r"><input value="100" aria-label="比例7"><span>%</span></div>
      </fieldset>
    </div>
    <div class="foot">
      <label for="py">平仓条件计算价(Y):</label><select id="py"><option>盘中触位价</option></select>
      <label for="pz" class="far">止损平仓时机与价位(Z):</label><select id="pz"><option>本周期中价</option></select>
      <label for="pc">平仓后成本价(C):</label><select id="pc"><option>浮动计算</option></select>
    </div>
    <div class="acts"><button class="btn primary">确定</button><button class="btn">取消</button></div>
  </div>
</section>
<script src="charts.js"></script>
</body>
</html>
```
FILE: charts.js
```js
// Volume per bar; a negative sign marks a rising (hollow) bar.
const volumes = [5,-4,-1,3,3,-2,-5,1,5,9,-3,2,-2,2,3,1,1,-1,3,3,-4,5,9,12,-18,9,-4,6,10,14,6,6,6,7,1,-10,9,14,-40,-28,20,-14,-12,6,9,-7,6,8,-5,4,10,2,5,-3,2,-1,1,-15,6,2,2,-9,2,8,1,6,3,7,1,2,2,-17,2,2,-9,13,5,-1,3,3,8,3,10,-3,2,1,2,3,-2,2,-4,-3,5,1,1,3,5,3,-6,5,3,13,-6,-1,1,1,1,-3,1,3,-9,-3,7,22,1,4,1,2,1,2,5,-2,2,1,1,1,-1,-1,9,9,5,1,1,2,1,1,10,1,2,4,16,-16,1,3,4,5,3,-1,1,1,-6,-1,1,13,4,3,-5,-2,1,6,1,-2,2,-4,-2,7,1,1,1,1,-5,1,16,1,-1,3,11,14,-7,-2,-16,4,9,3,3,5,2,-2,4,-2,2,-3,2,3,-2,1,-4,2,3,3,4,24,12,2,-8,
1,1,2,2,3,5,-1,2,1,1,1,1,-2,1,2,1,1,1,2,-3,2,16,10,-2,-1,2,2,1,1,-2,2,-18,4,2,2,3,-2,2,1,3,1,-3,-2,1,2,-2,1,20,4,-5,-10,9,-5,2,-2,2,1,4,3,1,2,2,1,-11,5,-3,3,1,-8,3,-1,1,3,-3,11,2,4];
const base = 1541, unit = 6.25, step = 2143 / (volumes.length - 1);
let up = "", core = "", down = "";
volumes.forEach((v, i) => {
  const x = (8 + i * step).toFixed(1), top = base - Math.abs(v) * unit;
  if (v > 0) {
    down += `M${x} ${base}V${top}`;
  } else {
    up += `M${x} ${base}V${top}`;
    core += `M${x} ${base - 2}V${top + 2}`;
  }
});
document.getElementById("vol-up").setAttribute("d", up);
document.getElementById("vol-core").setAttribute("d", core);
document.getElementById("vol-down").setAttribute("d", down);
```
FILE: styles.css
```css
* { box-sizing: border-box; }
html, body { height: 100%; margin: 0; }
body {
  display: flex; flex-direction: column; position: relative; overflow: hidden;
  background: #24282d; color: #e6e6e6;
  font: 12px/16px "Noto Sans", "Noto Sans CJK SC", sans-serif;
}
button, input, select { font: inherit; color: inherit; margin: 0; padding: 0; border: 0; background: none; border-radius: 0; }
a { color: inherit; text-decoration: none; }
ul { list-style: none; margin: 0; padding: 0; }
i { font-style: normal; }
svg { display: block; flex: none; }
.defs { position: absolute; width: 0; height: 0; }
.ln { fill: none; stroke: currentColor; }

/* title, menu and tab bars */
.titlebar { display: flex; align-items: center; height: 26px; padding: 0 8px 0 4px; background: #0a0a0a; color: #9a9a9a; }
.logo { width: 21px; height: 21px; margin-right: 13px; }
.title-tools { display: flex; margin-left: auto; color: #d0d0d0; }
.title-tools button { display: flex; justify-content: center; width: 38px; }
.title-tools svg { width: 16px; height: 16px; }
.title-tools .dim { width: 37px; color: #8c8c8c; }
.title-tools .dim:last-child { width: 20px; margin-left: 8px; }
.menubar { display: flex; align-items: center; gap: 16px; height: 26px; padding: 0 4px; color: #f0f0f0; }
.grip { width: 2px; height: 14px; background: repeating-linear-gradient(#777 0 2px, transparent 2px 4px); }
.menubar .grip { margin-right: -12px; }
.mdi { width: 15px; height: 13px; margin-right: -4px; }
.mdi-tools { display: flex; gap: 4px; margin-left: auto; }
.mdi-tools svg { width: 12px; height: 12px; }
.tabstrip { height: 28px; }
.tabs { display: flex; align-items: center; width: fit-content; height: 26px; padding: 0 16px 0 4px; background: #1e2226; border-radius: 4px; }
.tabs a { padding: 2px 10px 2px 9px; border-right: 1px solid #4a4e52; white-space: nowrap; color: #f0f0f0; }
.tabs a:last-of-type { border: 0; }
.tab-close { color: #000; }

/* chart area */
.charts { flex: 1; min-height: 0; display: grid; grid-template-columns: 1381fr 1175fr; margin: 0 2px; background: #000; font: 12px/16px "Liberation Mono", "Noto Sans CJK SC", monospace; }
.col { display: grid; min-width: 0; min-height: 0; }
.col-left { grid-template-rows: 474fr 19px 646fr 156fr; border-right: 1px solid #b00000; }
.col-right { grid-template-rows: 448fr 18px 493fr 336fr; }
.panel { display: grid; grid-template-rows: 17px minmax(0, 1fr); min-height: 0; min-width: 0; }
.col-left .panel { grid-template-columns: minmax(0, 1fr) 57px; }
.col-right .panel { grid-template-columns: minmax(0, 1fr) 43px; }
.col-left .p-price { grid-template-rows: 38px minmax(0, 1fr); }
.p-vol, .p-multi, .p-p1 { border-top: 1px solid #c00000; }
.head { display: flex; align-items: center; gap: 7px; padding-left: 2px; white-space: nowrap; overflow: hidden; }
.head i { display: inline-block; width: 13px; text-align: center; }
.head.two { flex-direction: column; align-items: stretch; gap: 0; }
.line { display: flex; align-items: center; gap: 7px; height: 18px; }
.line + .line { padding-left: 4px; }
.boxed { grid-column: 1 / 3; border: 1px solid #fff; border-width: 1px 0 1px 1px; }
.corner { border-left: 1px solid #b00000; display: flex; justify-content: flex-end; padding: 2px 4px 0 0; }
.corner svg { width: 14px; height: 13px; }
.plot { position: relative; min-height: 0; min-width: 0; }
.plot svg { width: 100%; height: 100%; }
.plot svg * { vector-effect: non-scaling-stroke; shape-rendering: crispEdges; }
.axis { position: relative; display: flex; flex-direction: column; justify-content: space-between; border-left: 1px solid #b00000; color: #e8e8e8; }
.axis span { display: flex; align-items: center; justify-content: space-between; height: 0; padding-right: 1px; }
.axis span::before { content: ""; width: 4px; height: 1px; background: #b00000; }
.p-price .axis { padding: 39px 0 48px; }
.p-ratio .axis { padding: 59px 0 49px; }
.p-vol .axis { padding: 1px 0 9px; }
.p-overlay .axis { padding: 9px 0 14px; }
.p-multi .axis { padding: 107px 0 116px; }
.p-p1 .axis { padding: 39px 0 47px; }
.tag { position: absolute; top: -3px; left: 0; right: 0; height: 13px; padding-right: 1px; font-weight: 400; line-height: 13px; text-align: right; color: #e00000; background: #fff; clip-path: polygon(0 50%, 10% 0, 100% 0, 100% 100%, 10% 100%); }
.note { position: absolute; color: #c8c8c8; }
.note-low { left: 9%; top: 94%; }
.note-high { left: 95%; top: 0; }
.times { display: grid; border-top: 2px solid #b00000; color: #e8e8e8; white-space: nowrap; }
.times span { border-left: 1px solid #b00000; padding-left: 1px; line-height: 17px; overflow: hidden; }
.col-left .times { grid-template-columns: 524fr 406fr 449fr; padding-left: 3px; border-bottom: 1px solid #c00000; }
.col-right .times { grid-template-columns: 580fr 378fr 167fr 43px; padding-left: 7px; }
.times .unit { padding-left: 11px; }
.white { color: #f0f0f0; }
.quote { color: #c0c0c0; }
.yellow { color: #ffff00; }
.red { color: #ff0000; width: 9px; }
.magenta { color: #c000a0; }
.fuchsia { color: #ff00ff; }
.aqua { color: #00e5e5; }
.fuchsia + .aqua { margin-left: -7px; }
.q-r { color: #f00000; }
.q-g { color: #00ff00; }
.p-multi .lead { width: 119px; }
.kbox { display: flex; width: 26px; height: 13px; border: 1px solid #a00000; line-height: 11px; padding-left: 4px; background: #2a2a2a; }
.kbox b { margin-left: auto; color: #e00000; }
.chips { display: flex; align-items: center; gap: 2px; margin-left: auto; padding-right: 1px; color: #9a9a9a; }
.chips button { width: 24px; height: 15px; border: 1px solid #777; font-size: 11px; line-height: 13px; }
.chips .hot { color: #a02020; border-color: #a02020; }
.chips svg { width: 16px; height: 16px; margin-left: 1px; color: #ddd; }

/* drawing classes */
.grid { fill: none; stroke: #a00000; stroke-dasharray: 1 3; }
.up { stroke: #ff3232; stroke-width: 3; }
.up-core { stroke: #000; stroke-width: 1; }
.down { stroke: #00e0e0; stroke-width: 3; }
.flat { stroke-dasharray: 3 2; }
.cy { stroke: #00d8d8; }
.rd { stroke: #ff3232; }
.dash { fill: none; stroke-dasharray: 4 4; }
.white-l { stroke: #fff; }
.p-price .dash { stroke-dasharray: 4 3; }
.fuchsia-l { stroke: #f0f; }
.aqua-l { stroke: #0ff; }
.pointer { stroke: #c8c8c8; }
.marks { stroke: #fff; stroke-width: 6; stroke-linecap: square; }
.vol-up { stroke: #ff3232; stroke-width: 4; }
.vol-core { stroke: #000; stroke-width: 2; }
.vol-down { stroke: #00e0e0; stroke-width: 4; }
.s-red, .s-green { fill: none; stroke-width: 1; }
.s-red { stroke: #f00; }
.s-green { stroke: #0f0; }
.s-red.thick, .s-green.thick { stroke-width: 2; }

/* index ticker */
.status { position: relative; display: flex; height: 25px; border-top: 3px solid #4a4e52; background: #1e2226; font-size: 15px; line-height: 22px; }
.indices { flex: 1; display: grid; grid-template-columns: repeat(4, 1fr); padding-left: 9px; white-space: nowrap; font: 13px/22px "Liberation Mono", "Noto Sans CJK SC", monospace; word-spacing: 0; }
.indices b { font: 15px/22px "Noto Sans", "Noto Sans CJK SC", sans-serif; }
.indices em { font-style: normal; color: #00e000; }
.status-tools { display: flex; width: 359px; padding: 0 4px 0 17px; font-size: 12px; color: #c8c8c8; }
.live { width: 68px; }
.status-tools button { display: flex; justify-content: center; align-items: center; width: 30px; border-left: 1px solid #4a4e52; }
.status-tools button svg { width: 16px; height: 16px; }
.status-tools time { flex: 1; border-left: 1px solid #4a4e52; padding-left: 3px; color: #f0c890; }
.ime { position: absolute; right: 351px; top: 0; display: flex; align-items: center; width: 206px; height: 22px; background: #fff; }
.ime-logo { width: 30px; height: 26px; }
.ime-icons { width: 172px; height: 18px; margin-left: 1px; }

/* taskbar */
.taskbar { display: flex; height: 40px; background: #1c1c1c; }
.start { display: flex; justify-content: center; align-items: center; width: 48px; }
.start svg { width: 16px; height: 16px; }
.search { display: flex; align-items: center; width: 288px; height: 40px; padding: 0 10px 0 12px; background: #f3f3f3; border: 1px solid #bbb; color: #222; }
.search > svg:first-child { width: 17px; height: 17px; }
.search input { flex: 1; min-width: 0; margin-left: 10px; font-size: 14px; }
.search input::placeholder { color: #333; opacity: 1; }
.spark { width: 64px; height: 32px; }
.tview { display: flex; justify-content: center; align-items: center; width: 50px; }
.tview svg { width: 18px; height: 18px; }
.apps { display: flex; }
.apps button { position: relative; display: flex; justify-content: center; align-items: center; width: 49px; }
.apps svg { width: 24px; height: 24px; }
.apps .open::after { content: ""; position: absolute; left: 5px; right: 5px; bottom: 0; height: 2px; background: #76b9ed; }
.apps .current { background: #5a5a5a; }
.apps .current::after { left: 0; right: 0; }
.ico-t { font-family: "Liberation Sans", sans-serif; font-weight: 700; text-anchor: middle; }
.t7 { font-size: 7px; } .t10 { font-size: 10px; } .t12 { font-size: 12px; } .t20 { font-size: 20px; }
.tray { display: flex; align-items: center; gap: 8px; margin-left: auto; padding-right: 0; color: #eee; }
.tray svg { width: 17px; height: 17px; }
.clock { display: flex; flex-direction: column; justify-content: space-around; width: 80px; margin: 0 0 0 8px; text-align: center; color: #fff; }
.notice { width: 36px; display: flex; justify-content: center; align-items: center; margin: 0 16px 0 2px; }
.notice svg { width: 16px; height: 16px; }

/* desktop windows */
.win { position: absolute; background: #f0f0f0; color: #000; border: 1px solid #3c3c3c; font: 12px/16px "Liberation Serif", "Noto Sans CJK SC", serif; white-space: nowrap; }
.win header, .win > nav { background: #fff; font-family: "Noto Sans", "Noto Sans CJK SC", sans-serif; }
.win header { display: flex; align-items: center; height: 24px; padding-left: 3px; }
.win label, .win .r, .cond, .frame { display: flex; align-items: center; }
.win input:not([type]) { height: 20px; padding: 0 2px 3px 4px; background-color: #fff; border: 1px solid #7a7a7a; }
.win select, .win .combo {
  height: 20px; padding: 0 16px 0 3px; appearance: none; border: 1px solid #adadad; background-color: #e1e1e1;
  background-image: url("data:image/svg+xml,%3Csvg xmlns='http://www.w3.org/2000/svg' width='9' height='6'%3E%3Cpath d='M.5.5l4 4 4-4' fill='none' stroke='%23444'/%3E%3C/svg%3E");
  background-repeat: no-repeat; background-position: right 4px center;
}
.win .combo:not([type]) { padding: 0 16px 1px 2px; background-color: #fff; border: 1px solid #7a7a7a; }
.win .combo.focus:not([type]) {
  border-color: #0078d7; color: #fff;
  background-image: url("data:image/svg+xml,%3Csvg xmlns='http://www.w3.org/2000/svg' width='9' height='6'%3E%3Cpath d='M.5.5l4 4 4-4' fill='none' stroke='%23444'/%3E%3C/svg%3E"), linear-gradient(#0078d7, #0078d7);
  background-size: 9px 6px, 13px 13px; background-position: right 4px center, 2px 2px;
}
.chk input, .rad input { appearance: none; flex: none; width: 13px; height: 13px; margin-right: 2px; border: 1px solid #333; background: #fff; }
.chk input:checked { background: #fff url("data:image/svg+xml,%3Csvg xmlns='http://www.w3.org/2000/svg' width='11' height='11'%3E%3Cpath d='M1.500 5.500l3 3 5-6' fill='none' stroke='%23222'/%3E%3C/svg%3E"); }
.rad input { border-radius: 50%; margin-right: 3px; }
.rad input:checked { background: radial-gradient(#222 0 3px, #fff 4px); }
.btn { height: 19px; border: 1px solid #adadad; background: #e1e1e1; line-height: 16px; }
.btn.primary { border: 2px solid #0078d7; line-height: 14px; }
.w42 { width: 43px; } .w48 { width: 48px; } .w50 { width: 50px; } .w56 { width: 56px; } .w60 { width: 60px; } .w62 { width: 63px; } .w75 { width: 75px; }

.win-test { left: 953px; top: 470px; width: 653px; height: 458px; }
.win-test header { color: #999; }
.win-test > nav { display: flex; gap: 15px; height: 19px; padding-left: 6px; color: #666; line-height: 22px; }
.wtabs { display: flex; align-items: flex-end; padding-left: 3px; height: 34px; }
.wtabs button { height: 18px; padding: 0 4px; border: 1px solid #d9d9d9; border-width: 1px 1px 0 0; }
.wtabs .on { height: 21px; padding: 0 7px; background: #fff; border-left-width: 1px; }
.page { height: 294px; margin: 0 3px; padding: 7px 2px 1px 3px; background: #fff; border: 1px solid #dcdcdc; }
.page-in { display: flex; height: 100%; background: #f0f0f0; padding: 5px 0 7px 14px; gap: 5px; }
.tree-col, .list-col, .opt-col { display: flex; flex-direction: column; }
.cap { line-height: 18px; margin-bottom: 2px; }
.box { position: relative; flex: 1; min-height: 0; border: 1px solid #828790; background: #fff; overflow: hidden; }
.tree-col .box { width: 147px; }
.tree { margin-left: 7px; border-left: 1px dotted #777; padding: 1px 0 0 18px; }
.tree li { display: flex; align-items: center; gap: 5px; height: 18px; border-left: 1px dotted #777; }
.tree li::before { content: ""; width: 9px; border-top: 1px dotted #777; margin-right: -5px; }
.tree svg { width: 16px; height: 13px; }
.tree .sel span { background: #ededed; }
.list-col .box { width: 216px; }
.list-col { padding-top: 20px; }
.list { position: absolute; left: 6px; right: 18px; bottom: 19px; }
.list li { display: flex; align-items: center; gap: 4px; height: 17px; }
.list svg { width: 14px; height: 15px; }
.list span { width: 100px; }
.vbar { position: absolute; right: 0; top: 0; bottom: 0; width: 17px; background: #f0f0f0; }
.vbar::after { content: ""; position: absolute; left: 4px; bottom: 24px; width: 6px; height: 6px; border: solid #505050; border-width: 0 2px 2px 0; transform: rotate(45deg); }
.hbar { position: absolute; left: 0; right: 0; bottom: 0; height: 17px; background: #f0f0f0; }
.hbar b { position: absolute; left: 20px; top: 0; width: 72px; height: 15px; background: #cdcdcd; }
.list-col .hbar b { left: 19px; width: 52px; }
.hbar::before, .hbar::after { content: ""; position: absolute; left: 8px; top: 5px; width: 6px; height: 6px; border: solid #505050; border-width: 0 0 2px 2px; transform: rotate(45deg); }
.hbar::after { left: auto; right: 25px; border-width: 2px 2px 0 0; }
.opt-col { justify-content: flex-end; gap: 7px; }
.period { display: flex; flex-direction: column; gap: 3px; width: 110px; padding: 0 4px 0 5px; border: 1px solid #dcdcdc; border-top: 0; margin-bottom: 4px; }
.period select { width: 66px; margin-left: auto; }
.period .lock { padding-left: 28px; }
.cond { gap: 6px; }
.cond label { width: 69px; }
.bars { display: flex; gap: 3px; margin: 9px 0 0 3px; }
.frame { height: 31px; border: 1px solid #a0a0a0; }
.fr-time { width: 444px; padding-left: 4px; gap: 4px; }
.fr-time .date:not([type]) { width: 89px; height: 22px; }
.fr-time label { width: 53px; }
.fr-time .to { width: 16px; overflow: hidden; }
.fr-time .amt { width: 76px; margin-left: 7px; }
.fr-time .amount:not([type]) { width: 57px; height: 22px; padding-right: 0; }
.fr-rep { width: 200px; padding-left: 8px; gap: 8px; }
.win-test .acts { display: flex; justify-content: flex-end; gap: 33px; margin: 19px 21px 0 0; }
.win-test .btn { width: 75px; }

.win-exit { left: 1091px; top: 431px; width: 535px; height: 321px; box-shadow: 2px 3px 8px rgba(0, 0, 0, .5); }
.win-exit header { height: 25px; padding-left: 2px; }
.x { display: flex; margin: 0 9px 0 auto; }
.x svg { width: 12px; height: 12px; }
.body { padding: 9px 9px 0 10px; }
.groups { display: flex; align-items: flex-start; }
fieldset { margin: 0; min-width: 0; border: 1px solid #dcdcdc; }
legend { padding: 0 3px; }
.g-cond { width: 442px; height: 216px; padding: 1px 0 0 14px; }
.g-cond legend { margin-left: -10px; }
.g-ratio { width: 72px; height: 214px; padding: 2px 0 0 6px; border-left: 0; }
.g-ratio legend { margin-left: -3px; }
.win .r { height: 24px; gap: 5px; }
.win .r.gap { height: 26px; padding-bottom: 2px; }
.g-ratio input:not([type]) { width: 39px; }
.l129 { width: 140px; } .l236 { width: 247px; } .l173 { width: 184px; } .l204 { width: 215px; } .l87 { width: 97px; } .l189 { width: 200px; }
.mid { width: 110px; } .mid2 { width: 43px; }
.pc { margin-left: -3px; }
.hot { color: #f00; }
.foot { display: grid; grid-template-columns: 116px 95px 159px 96px; gap: 4px 5px; align-items: center; padding: 6px 0 0 15px; }
.foot .far { padding-left: 25px; }
.foot select { width: 100%; }
.win-exit .acts { display: flex; justify-content: flex-end; gap: 36px; margin: -9px 5px 0 0; }
.win-exit .btn { width: 73px; }
```
